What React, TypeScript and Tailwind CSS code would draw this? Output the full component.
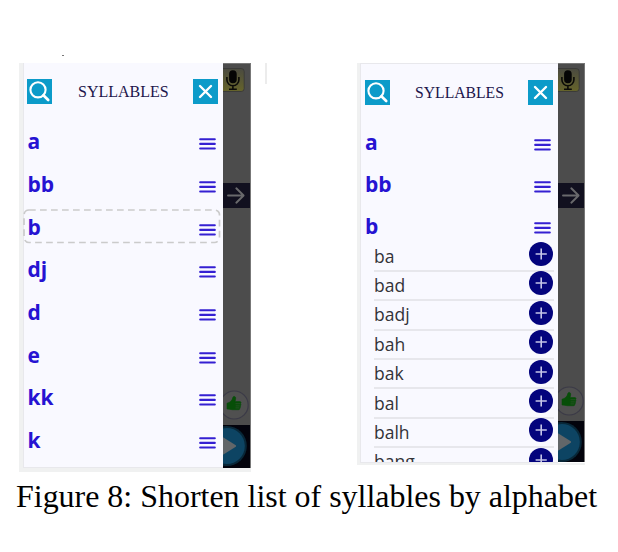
import React from "react";

function SearchButton() {
  return (
    <svg viewBox="0 0 25 25" className="block h-[25px] w-[25px] shrink-0 bg-[#0c9bc9]" fill="none" stroke="#fff">
      <circle cx="11" cy="10.8" r="7.6" strokeWidth="2.1" />
      <path d="M16.4 16.2 21.2 21" strokeWidth="2.7" strokeLinecap="round" />
    </svg>
  );
}

function CloseButton() {
  return (
    <svg viewBox="0 0 25 25" className="block h-[25px] w-[25px] shrink-0 bg-[#0c9bc9]" fill="none" stroke="#fff">
      <path d="M7 7 18 18M18 7 7 18" strokeWidth="2.4" strokeLinecap="round" />
    </svg>
  );
}

function Bars() {
  return (
    <svg viewBox="0 0 17 14" className="block h-[14px] w-[17px] shrink-0" stroke="#3520d2" strokeWidth="2.1" strokeLinecap="round">
      <path d="M1.2 2.2H15.8M1.2 6.9H15.8M1.2 11.5H15.8" />
    </svg>
  );
}

function Plus() {
  return (
    <svg viewBox="0 0 24 24" className="block h-[24px] w-[24px] shrink-0">
      <circle cx="12" cy="12" r="12" fill="#04047d" />
      <path d="M6.6 12H17.8M12.2 6.4V17.6" stroke="#c5c5e8" strokeWidth="1.6" />
    </svg>
  );
}

function Backdrop({ bottomGap, className }: { bottomGap: string; className: string }) {
  return (
    <div className={"flex shrink-0 flex-col overflow-hidden border-r border-t border-[#777] bg-[#4c4c4c] " + className}>
      <svg viewBox="0 0 28 30" className="block h-[30px] w-[28px] shrink-0">
        <defs>
          <linearGradient id="key" x1="0" y1="0" x2="0" y2="1">
            <stop offset="0" stopColor="#4a4a40" />
            <stop offset="1" stopColor="#66642a" />
          </linearGradient>
        </defs>
        <rect x="-4" y="4.5" width="25.2" height="23" rx="3" fill="url(#key)" stroke="#3b3b39" />
        <rect x="6.1" y="6.2" width="7.6" height="13" rx="3.8" fill="#050505" />
        <path d="M3.9 13v2.8a6 6 0 0 0 12 0V13M9.9 22v3.5M6 25.2H13.8" fill="none" stroke="#0b0b08" strokeWidth="1.6" />
      </svg>
      <svg viewBox="0 0 28 25" className="mt-[89px] block h-[25px] w-[28px] shrink-0 bg-[#11101f]" fill="none" stroke="#69696c" strokeWidth="1.9" strokeLinecap="round" strokeLinejoin="round">
        <path d="M5 12.5H20.4M13.3 5.3 20.6 12.5 13.3 19.7" />
      </svg>
      <svg viewBox="0 0 28 30" className={"block h-[30px] w-[28px] shrink-0 " + bottomGap}>
        <circle cx="11.2" cy="15" r="14" fill="#505050" stroke="#3b3a47" strokeWidth="1.2" />
        <path d="M4 13.2C7 12.7 9.2 10.7 10 7.1c.4-1.2 2.6-.8 2.7.8.1 1.3-.4 2.7-.8 3.7h5c1.4 0 1.4 2 .2 2.1 1.2.3 1.2 2-.2 2.2 1 .4.8 1.9-.4 2 .7.7.2 1.8-1 1.8H9.2C7.4 19.7 5.8 19 4 19Z" fill="#074e08" stroke="#074e08" strokeWidth=".6" />
        <path d="M12.5 13.7h4.5M12.6 15.9h4.2M12.5 17.9h3.8" stroke="#30502f" strokeWidth=".7" />
      </svg>
      <svg viewBox="0 0 28 43" className="mt-[5px] block h-[43px] w-[28px] shrink-0 bg-[#03030c]">
        <circle cx="3.8" cy="21" r="20" fill="#082738" />
        <circle cx="3.8" cy="21" r="18" fill="#0d4463" />
        <path d="M0 12.3 12.8 20.3Q13.6 21 12.8 21.7L0 29.7Z" fill="#626669" />
      </svg>
    </div>
  );
}

function LeftScreen() {
  const rows = ["a", "bb", "b", "dj", "d", "e", "kk", "k"];
  return (
    <div className="flex h-[409px] w-[232px] border-b-[4px] border-l-[4px] border-[#f0f1f1]">
      <div className="flex w-[200px] shrink-0 flex-col border-b border-l border-[#e8e8ec] bg-[#f9f9ff]">
        <div className="flex h-[57px] shrink-0 items-center pl-[3px] pr-[5px]">
          <SearchButton />
          <div className="ml-[26px] grow whitespace-nowrap font-['Liberation_Serif',serif] text-[16px] leading-[20px] text-[#1d164c]">SYLLABLES</div>
          <CloseButton />
        </div>
        <div className="mt-[3px] flex flex-col">
          {rows.map((r, i) => (
            <div key={r} className="relative flex h-[42.65px] items-center justify-between pl-[3.5px] pr-[7px]">
              {i === 2 && (
                <svg className="absolute -left-[1px] top-[1px] h-[35px] w-[198px]" viewBox="0 0 198 35" fill="none">
                  <rect x="1" y="1" width="195.5" height="32.5" rx="5" stroke="#cbcbcb" strokeWidth="1.7" strokeDasharray="6.7 4.3" />
                </svg>
              )}
              <span className="pb-[6px] font-['Open_Sans','Noto_Sans',sans-serif] text-[21px] font-bold leading-[28px] text-[#2613d2]">{r}</span>
              <Bars />
            </div>
          ))}
        </div>
      </div>
      <Backdrop className="h-[405px] w-[28px]" bottomGap="mt-[182px]" />
    </div>
  );
}

function RightScreen() {
  const rows = ["a", "bb", "b"];
  const items = ["ba", "bad", "badj", "bah", "bak", "bal", "balh", "bang"];
  return (
    <div className="flex h-[402px] w-[228px] border-b-[2px] border-l-[3px] border-[#f0f1f1]">
      <div className="flex h-[400px] w-[198px] shrink-0 flex-col overflow-hidden border-b border-l border-t border-[#e8e8ec] bg-[#f9f9ff]">
        <div className="flex h-[57px] shrink-0 items-center pl-[4px] pr-[5px]">
          <SearchButton />
          <div className="ml-[25px] grow whitespace-nowrap font-['Liberation_Serif',serif] text-[15.7px] leading-[20px] text-[#1d164c]">SYLLABLES</div>
          <CloseButton />
        </div>
        <div className="mt-[3px] flex shrink-0 flex-col">
          {rows.map((r) => (
            <div key={r} className="flex h-[41.8px] items-center justify-between pl-[4px] pr-[7px]">
              <span className="pb-[5px] font-['Open_Sans','Noto_Sans',sans-serif] text-[21px] font-bold leading-[28px] text-[#2613d2]">{r}</span>
              <Bars />
            </div>
          ))}
        </div>
        <div className="-mt-[7px] ml-[13px] mr-[4px] flex shrink-0 flex-col">
          {items.map((r) => (
            <div key={r} className="flex h-[29.4px] shrink-0 items-center justify-between border-b-[2px] border-[#e7e7ec] pr-[1px]">
              <span className="pb-[1px] font-['Open_Sans','Noto_Sans',sans-serif] text-[17.5px] leading-[24px] text-[#333338]">{r}</span>
              <span className="pb-[4px]">
                <Plus />
              </span>
            </div>
          ))}
        </div>
      </div>
      <Backdrop className="h-[399px] w-[27px]" bottomGap="mt-[178px]" />
    </div>
  );
}

export default function App() {
  return (
    <div className="flex h-[552px] w-[618px] flex-col overflow-hidden bg-white">
      <div className="flex h-[63px] shrink-0 items-end pb-[7px] pl-[62px]">
        <span className="h-[1px] w-[2px] bg-[#777]" />
      </div>
      <div className="flex h-[413px] shrink-0 items-start pl-[19px]">
        <LeftScreen />
        <div className="ml-[14px] h-[21px] w-[2px] bg-[#ececec]" />
        <div className="ml-[90px]">
          <RightScreen />
        </div>
      </div>
      <div className="whitespace-nowrap pl-[16px] pt-[1px] font-['Liberation_Serif',serif] text-[31.95px] leading-[40px] text-black">
        Figure 8: Shorten list of syllables by alphabet
      </div>
    </div>
  );
}
